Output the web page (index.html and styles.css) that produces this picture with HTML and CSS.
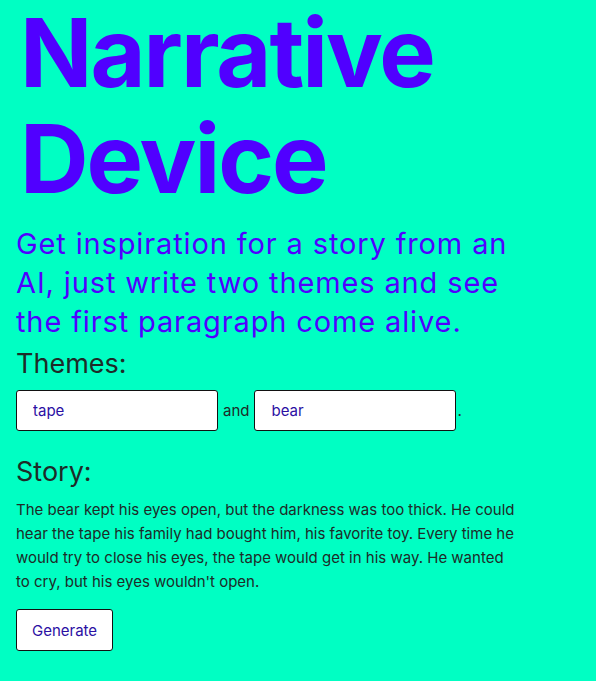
FILE: index.html
```html
<!DOCTYPE html>
<html lang="en">
<head>
    <meta charset="UTF-8">
    <meta name="viewport" content="width=device-width, initial-scale=1.0">
    <title>Narrative Device</title>
    <link rel="stylesheet" href="styles.css">
</head>
<body>
    <div class="page">
        <h1>Narrative<br>Device</h1>
        <p class="intro">Get inspiration for a story from an AI, just write two themes and see the first paragraph come alive.</p>

        <h2>Themes:</h2>
        <div class="themes">
            <input type="text" class="theme-input" value="tape">
            <span class="joiner">and</span>
            <input type="text" class="theme-input" value="bear">
            <span class="stop">.</span>
        </div>

        <h2 class="story-title">Story:</h2>
        <p class="story">The bear kept his eyes open, but the darkness was too thick. He could hear the tape his family had bought him, his favorite toy. Every time he would try to close his eyes, the tape would get in his way. He wanted to cry, but his eyes wouldn't open.</p>

        <button class="generate">Generate</button>
    </div>
</body>
</html>
```

FILE: styles.css
```css
body {
    font-family: 'Inter', 'Noto Sans', sans-serif;
    background-color: #00ffc3;
    color: #1e2b28;
    margin: 0;
    padding: 0;
}

.page {
    padding: 0 16px 24px;
}

h1 {
    color: #5000ff;
    font-size: 95px;
    font-weight: 700;
    line-height: 106px;
    letter-spacing: -2px;
    margin: 0;
    padding: 0 8px 0 4px;
}

.intro {
    color: #5000ff;
    font-size: 29px;
    line-height: 39px;
    letter-spacing: 0.03em;
    margin: 12px 0 0;
    width: 510px;
}

h2 {
    font-size: 27px;
    font-weight: 400;
    margin: 6px 0 10px;
}

.themes {
    display: flex;
    align-items: center;
    gap: 5px;
}

.theme-input {
    width: 202px;
    height: 41px;
    box-sizing: border-box;
    padding: 0 16px;
    border: 1px solid #111;
    border-radius: 3px;
    background: #fff;
    color: #2b0fa3;
    font-family: inherit;
    font-size: 15px;
}

.joiner,
.stop {
    font-size: 15px;
}

.stop {
    margin-left: -4px;
}

.story-title {
    margin-top: 24px;
    margin-bottom: 10px;
}

.story {
    font-size: 15px;
    line-height: 24px;
    margin: 0 0 15px;
    width: 505px;
}

.generate {
    background: #fff;
    color: #2b0fa3;
    border: 1px solid #111;
    border-radius: 3px;
    height: 42px;
    padding: 0 15px;
    font-family: inherit;
    font-size: 15px;
}
```
